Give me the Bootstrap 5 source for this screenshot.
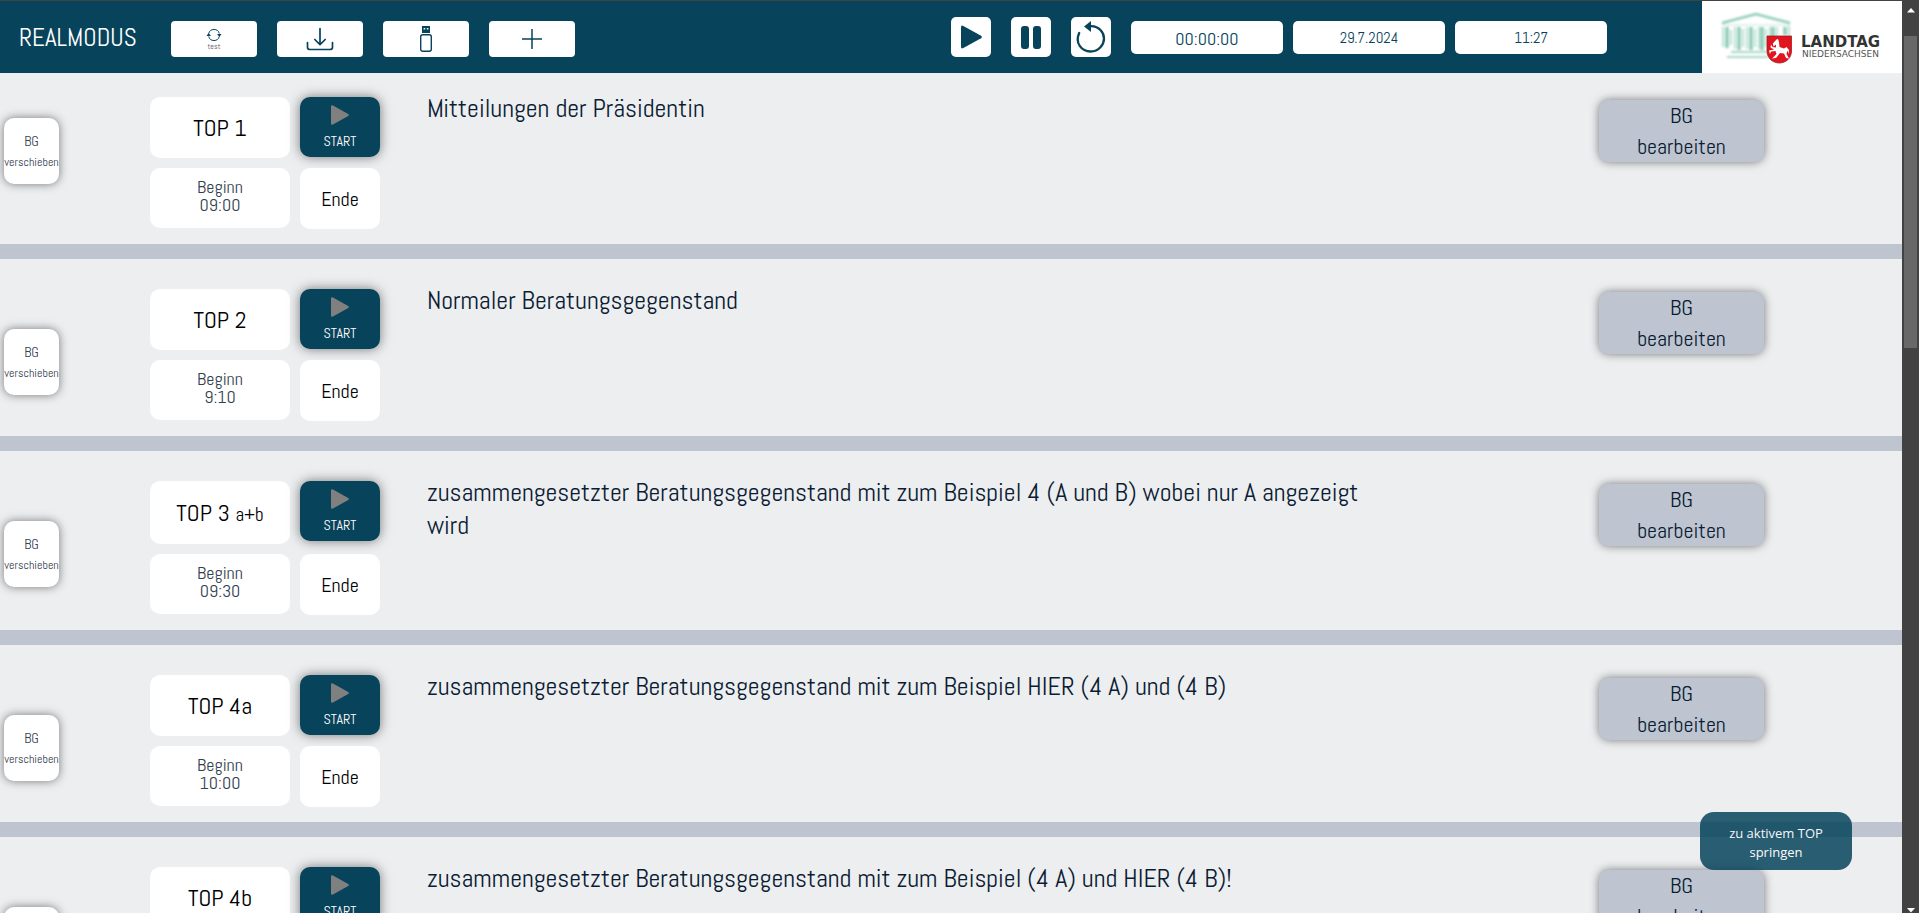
<!DOCTYPE html>
<html lang="de">
<head>
<meta charset="utf-8">
<meta name="viewport" content="width=device-width, initial-scale=1">
<title>Realmodus</title>
<link href="https://cdn.jsdelivr.net/npm/bootstrap@5.3.0/dist/css/bootstrap.min.css" rel="stylesheet">
<style>
  :root { --petrol: #07435b; --mist: #edeef0; --steel: #bec5d1; --ink: #0b1c33; }
  html, body { height: 100%; }
  body { font-family: Abel, "Liberation Sans Narrow", "Roboto Condensed", "Liberation Sans", sans-serif; background: var(--mist); color: var(--ink); border-top: 1px solid #424242; }
  .scroll-pane { min-width: 0; }
  .topbar { background: var(--petrol); height: 72px; }
  .mode-title { font-size: 25px; line-height: 32px; width: 171px; padding: 2px 0 0 19px; color: #fff; }
  .tool-btn { width: 86px; height: 36px; border-radius: 4px; background: #fff; color: var(--petrol); font-size: 8px; line-height: 9px; }
  .tool-btn span { color: #6b5a52; }
  .media-btn { width: 40px; height: 40px; border-radius: 5px; background: #fff; color: var(--petrol); }
  .time-field { width: 152px; height: 33px; border-radius: 5px; background: #fff; color: var(--petrol); font-size: 15px; padding-top: 2px; }
  .time-field.elapsed { font-size: 18px; }
  .brand { width: 200px; }
  .agenda-row { border-bottom: 15px solid var(--steel); padding: 30px 0 15px; }
  .agenda-row.first { padding-top: 24px; }
  .move-col { width: 150px; padding: 40px 0 0 4px; }
  .first .move-col { padding-top: 21px; }
  .move-btn { width: 55px; height: 66px; border-radius: 10px; background: #fff; color: #33424f; font-size: 14px; line-height: 20px; box-shadow: 0 0 10px rgba(0,0,0,.5); }
  .move-btn span { font-size: 12px; }
  .tiles { display: grid; grid-template-columns: 140px 80px; gap: 10px; align-items: start; }
  .tile { background: #fff; border-radius: 10px; min-height: 60px; }
  .top-no { font-size: 24px; min-height: 61px; color: #000; }
  .joint .top-no { min-height: 63px; }
  .top-no small { font-size: 19px; }
  .begin { font-size: 18px; line-height: 18px; color: #33424f; padding-bottom: 4px; }
  .end { font-size: 20px; min-height: 61px; color: #000; padding-top: 1px; }
  .start-btn { background: var(--petrol); color: #fff; font-size: 14px; line-height: 16px; height: 60px; border-radius: 10px; box-shadow: 0 0 12px rgba(0,0,0,.5); }
  .subject { font-size: 26px; line-height: 33px; width: 50%; margin: -5px 0 0 47px; font-weight: 400; }
  .edit-btn { width: 165px; height: 62px; margin: 3px 138px 0 auto; border-radius: 10px; background: var(--steel); color: var(--ink); font-size: 22px; line-height: 31px; box-shadow: 0 0 10px rgba(0,0,0,.5); }
  .jump-btn { right: 67px; bottom: 43px; width: 152px; height: 58px; border-radius: 14px; background: var(--petrol); opacity: .85; color: #fff; font: 500 13px/19px "Open Sans", "Noto Sans", sans-serif; }
  .rail { width: 17px; background: #424242; padding: 6px 2px 0; }
  .rail-thumb { background: #686868; height: 312px; margin-top: 23px; }
</style>
</head>
<body class="d-flex overflow-hidden">
<svg class="d-none" aria-hidden="true">
  <symbol id="i-play" viewBox="0 0 18 20"><path d="M0 1.600Q0-.6 2 .5L17.200 8.900Q18.600 10 17.200 11.100L2 19.500Q0 20.600 0 18.400Z" fill="currentColor"/></symbol>
</svg>

<div class="scroll-pane flex-grow-1 overflow-hidden">
  <header class="topbar d-flex align-items-stretch">
    <div class="w-50 d-flex align-items-center">
      <h1 class="mode-title mb-0 fw-normal">REALMODUS</h1>
      <div class="d-flex mt-1" style="gap:20px">
        <button type="button" class="tool-btn border-0 p-0 d-flex flex-column align-items-center justify-content-center">
          <svg width="16" height="14" viewBox="0 0 16 14" fill="none" stroke="currentColor" stroke-width="1"><path d="M2.700 5.500a5.500 5.500 0 0 1 10.600 0M2.700 8.500a5.500 5.500 0 0 0 10.600 0"/><path d="M.5 8 2.600 5 5 8ZM11 6H15.500L13.400 9Z" fill="currentColor" stroke="none"/></svg>
          <span>test</span>
        </button>
        <button type="button" class="tool-btn border-0 p-0" aria-label="Herunterladen">
          <svg width="28" height="24" viewBox="0 0 28 24" fill="none" stroke="currentColor" stroke-width="1.700" stroke-linecap="round" stroke-linejoin="round"><path d="M14 1.500V17.500M8.800 12.500 14 17.700 19.200 12.500M1.500 15.500V20.200Q1.500 22.500 4 22.500H24Q26.500 22.500 26.500 20.200V15.500"/></svg>
        </button>
        <button type="button" class="tool-btn border-0 p-0" aria-label="USB">
          <svg width="14" height="28" viewBox="0 0 14 28"><path d="M3 1H11V8H3Z" fill="currentColor"/><path d="M4.600 3H6.200V4.600H4.600ZM7.800 3H9.400V4.600H7.800Z" fill="#fff"/><rect x="1.700" y="9.700" width="10.600" height="16.600" rx="2" fill="none" stroke="currentColor" stroke-width="1.400"/></svg>
        </button>
        <button type="button" class="tool-btn border-0 p-0" aria-label="Hinzufügen">
          <svg width="20" height="20" viewBox="0 0 20 20" stroke="currentColor" stroke-width="1.500"><path d="M10 0V20M0 10H20"/></svg>
        </button>
      </div>
    </div>
    <div class="w-50 d-flex align-items-center">
      <div class="d-flex align-items-center" style="gap:20px">
        <button type="button" class="media-btn border-0 p-0" aria-label="Start"><svg width="21" height="24"><use href="#i-play"/></svg></button>
        <button type="button" class="media-btn border-0 p-0" aria-label="Pause"><svg width="20" height="24" viewBox="0 0 20 24" fill="currentColor"><rect width="8" height="23" y="1" rx="3"/><rect x="12" width="8" height="23" y="1" rx="3"/></svg></button>
        <button type="button" class="media-btn border-0 p-0" aria-label="Zurücksetzen"><svg width="32" height="34" viewBox="0 0 32 34"><path d="M4.200 13C-.5 23.500 7 31.500 15.500 31.500S29 24.500 29 18.500 24.500 6.500 16 6.200" fill="none" stroke="currentColor" stroke-width="2.300" stroke-linecap="round"/><path d="M16 1V12L9 6.500Z" fill="currentColor"/></svg></button>
      </div>
      <div class="d-flex ms-3 ps-1" style="gap:10px">
        <div class="time-field elapsed d-flex align-items-center justify-content-center">00:00:00</div>
        <div class="time-field d-flex align-items-center justify-content-center">29.7.2024</div>
        <div class="time-field d-flex align-items-center justify-content-center">11:27</div>
      </div>
      <div class="brand bg-white align-self-stretch ms-auto">
        <svg width="200" height="72" viewBox="0 0 200 72" role="img" aria-label="Landtag Niedersachsen">
          <defs><filter id="soft"><feGaussianBlur stdDeviation="1"/></filter></defs>
          <g filter="url(#soft)" fill="none" stroke="#8fcbb8">
            <path d="M20 22 54 13 88 22" stroke-width="2.400"/><path d="M20 24H88" stroke-width="1" opacity=".5"/>
            <path d="M25 26V47M37 26V49M49 26V49M60 26V49M71 26V47M83 26V34" stroke-width="3.500"/>
            <path d="M21 26V46M29 29V44M33 26V48M41 28V46M45 26V48M53 28V46M57 26V48M64 28V46M68 26V40M75 26V36M87 25V36" stroke-width="2" opacity=".6"/>
            <path d="M29 51H66M25 56H66" stroke-width="2" opacity=".8"/>
          </g>
          <path d="M65 35H89.500V50C89.500 57 84 62 77.300 62S65 57 65 50Z" fill="#e2141d" stroke="#9b2026" stroke-width=".8"/>
          <path d="M71.500 45.500 70.800 42.500 74.500 38.500 76 38 77 41 77.500 46 82 47.500 84.500 46 87 49 86.500 53 85.500 49.500 84.500 53 87 57.500 84 57 82 52.500 78 52 74 57 70 57.500 74.500 53 73.500 50 69 50.500 68 53 67 49.500 72 48.500 68.500 46.500 69 43.500 70.500 46 74 46.500 74 43.500Z" fill="#fff"/>
          <g font-family="'DejaVu Sans', sans-serif" fill="#333"><text x="99" y="46" font-size="15" font-weight="700">LANDTAG</text><text x="100" y="56" font-size="9" fill="#555">NIEDERSACHSEN</text></g>
        </svg>
      </div>
    </div>
  </header>

  <main id="agenda"></main>
</div>

<div class="rail flex-shrink-0 d-flex flex-column align-items-center" aria-hidden="true">
  <svg width="8" height="6" viewBox="0 0 8 6" fill="#fff"><path d="M4 1 8 5.500H0Z"/></svg>
  <div class="rail-thumb w-100"></div>
  <svg class="mt-auto" width="8" height="6" viewBox="0 0 8 6" fill="#fff"><path d="M0 1H8L4 5.500Z"/></svg>
</div>

<button type="button" class="jump-btn position-fixed border-0 px-3 pt-1 pb-0">zu aktivem TOP springen</button>

<template id="row">
  <section class="agenda-row d-flex align-items-start">
    <div class="move-col flex-shrink-0"><button type="button" class="move-btn border-0 p-0">BG<br><span>verschieben</span></button></div>
    <div class="tiles flex-shrink-0">
      <div class="tile top-no d-flex align-items-center justify-content-center"><div></div></div>
      <button type="button" class="start-btn border-0 p-0 d-flex flex-column align-items-center"><svg class="mt-2 mb-2" width="18" height="20" color="#808080"><use href="#i-play"/></svg>START</button>
      <div class="tile begin d-flex flex-column align-items-center justify-content-center"><span>Beginn</span><span class="time"></span></div>
      <div class="tile end d-flex align-items-center justify-content-center">Ende</div>
    </div>
    <h2 class="subject"></h2>
    <button type="button" class="edit-btn flex-shrink-0 border-0 p-0">BG<br>bearbeiten</button>
  </section>
</template>

<script src="https://cdn.jsdelivr.net/npm/bootstrap@5.3.0/dist/js/bootstrap.bundle.min.js"></script>
<script>
  const items = [
    ["TOP 1", "09:00", "Mitteilungen der Präsidentin", "first"],
    ["TOP 2", "9:10", "Normaler Beratungsgegenstand"],
    ["TOP 3 <small>a+b</small>", "09:30", "zusammengesetzter Beratungsgegenstand mit zum Beispiel 4 (A und B) wobei nur A angezeigt wird", "joint"],
    ["TOP 4a", "10:00", "zusammengesetzter Beratungsgegenstand mit zum Beispiel HIER (4 A) und (4 B)"],
    ["TOP 4b", "10:00", "zusammengesetzter Beratungsgegenstand mit zum Beispiel (4 A) und HIER (4 B)!"]
  ];
  for (const [top, time, subject, kind] of items) {
    const row = document.getElementById("row").content.cloneNode(true);
    if (kind) row.querySelector(".agenda-row").classList.add(kind);
    row.querySelector(".top-no div").innerHTML = top;
    row.querySelector(".time").textContent = time;
    row.querySelector(".subject").textContent = subject;
    document.getElementById("agenda").append(row);
  }
</script>
</body>
</html>
